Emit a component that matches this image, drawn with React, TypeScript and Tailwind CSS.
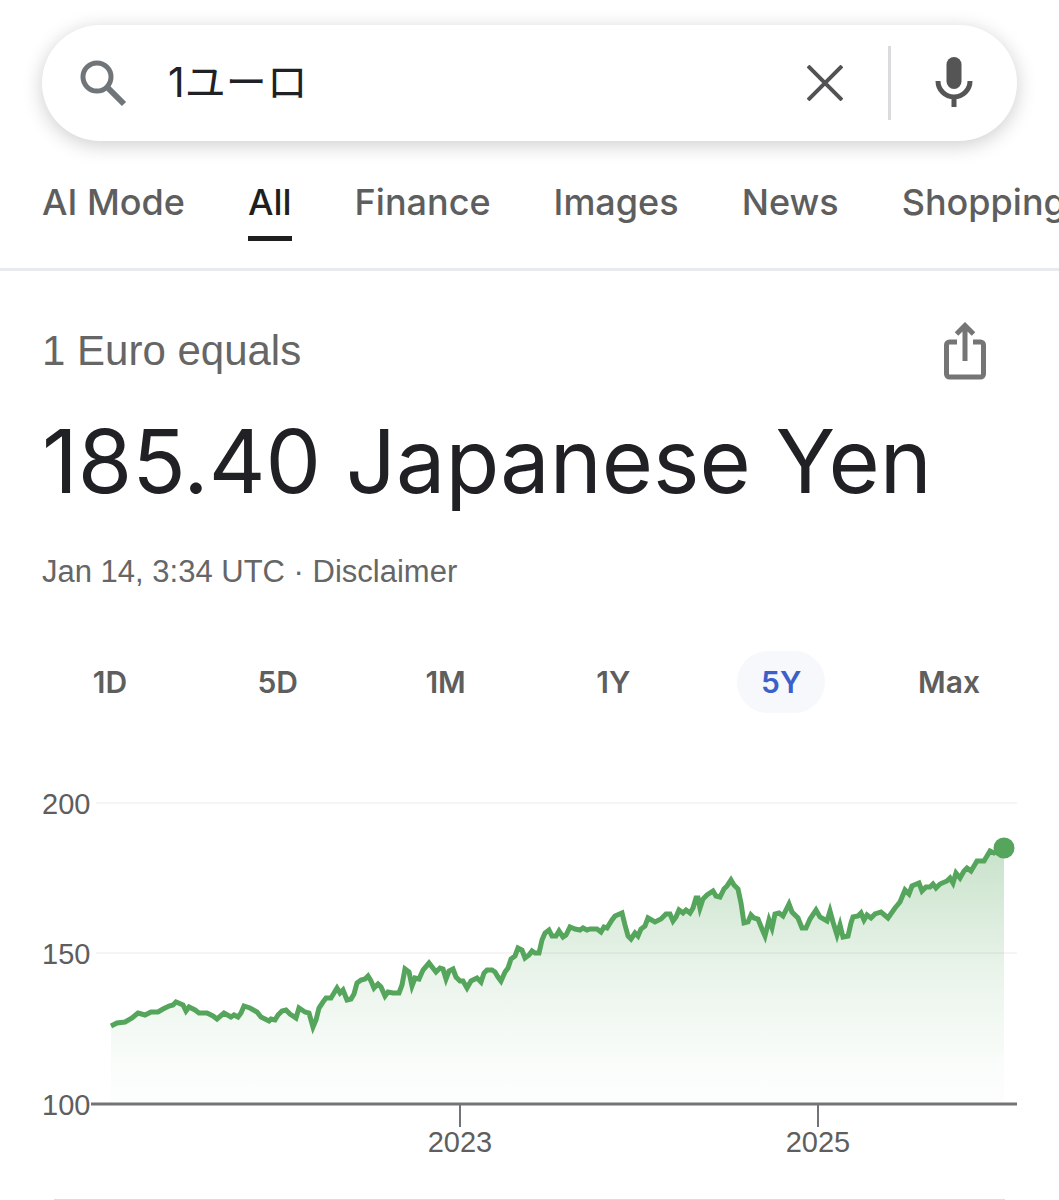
import { clsx } from "clsx";

const TABS = ["AI Mode", "All", "Finance", "Images", "News", "Shopping"] as const;

const RANGES = ["1D", "5D", "1M", "1Y", "5Y", "Max"] as const;

const CHART = { left: 42, right: 1017, top: 780, base: 1104, height: 384 };

const Y_TICKS = [
  { label: "200", y: 803 },
  { label: "150", y: 953 },
];

const X_TICKS = [
  { label: "2023", x: 460 },
  { label: "2025", x: 818 },
];

// EUR/JPY over five years, in chart units
const RATE: [number, number][] = [
  [111, 1026], [117, 1023], [125, 1022], [132, 1018], [138, 1013], [145, 1015], [151, 1012], [158, 1012],
  [163, 1009], [169, 1006], [173, 1005], [176, 1002], [183, 1005], [186, 1011], [189, 1007], [195, 1010],
  [199, 1013], [207, 1013], [213, 1016], [217, 1019], [224, 1013], [231, 1017], [234, 1015], [238, 1017],
  [241, 1013], [244, 1006], [250, 1008], [257, 1012], [261, 1017], [269, 1021], [271, 1019], [275, 1020],
  [278, 1015], [282, 1011], [286, 1010], [290, 1014], [296, 1018], [299, 1008], [305, 1012], [309, 1013],
  [313, 1027], [316, 1020], [319, 1008], [323, 1002], [326, 998], [331, 998], [334, 993], [337, 988],
  [340, 993], [343, 990], [347, 1000], [351, 999], [354, 994], [357, 983], [361, 980], [365, 979],
  [368, 976], [371, 981], [374, 988], [378, 984], [381, 987], [385, 996], [388, 992], [393, 993],
  [399, 993], [402, 985], [405, 969], [409, 972], [412, 986], [415, 978], [419, 979], [423, 970],
  [429, 963], [436, 972], [440, 968], [443, 969], [446, 979], [449, 971], [453, 969], [456, 977],
  [460, 981], [463, 981], [467, 988], [471, 981], [477, 978], [481, 982], [484, 973], [487, 970],
  [492, 970], [495, 972], [498, 977], [501, 981], [505, 972], [508, 968], [511, 959], [515, 956],
  [518, 948], [522, 950], [525, 958], [529, 955], [532, 951], [535, 953], [539, 953], [542, 940],
  [545, 933], [549, 930], [552, 936], [556, 936], [559, 931], [563, 937], [566, 935], [570, 927],
  [575, 929], [580, 930], [583, 928], [587, 930], [590, 929], [597, 929], [601, 932], [604, 927],
  [607, 928], [612, 920], [615, 916], [622, 913], [625, 925], [628, 936], [631, 939], [635, 933],
  [638, 936], [641, 929], [645, 926], [648, 918], [655, 922], [661, 919], [666, 914], [670, 914],
  [673, 921], [676, 917], [679, 910], [683, 913], [686, 910], [690, 913], [693, 908], [696, 898],
  [698, 898], [700, 908], [703, 899], [707, 895], [713, 891], [716, 896], [720, 897], [724, 889],
  [727, 886], [731, 880], [734, 885], [738, 889], [741, 903], [744, 923], [748, 922], [751, 915],
  [754, 918], [758, 919], [762, 929], [765, 936], [769, 920], [772, 928], [775, 914], [779, 913],
  [783, 916], [789, 904], [792, 912], [798, 918], [802, 928], [806, 928], [810, 919], [816, 910],
  [820, 917], [827, 921], [830, 911], [833, 922], [837, 935], [840, 925], [843, 937], [848, 936],
  [851, 923], [853, 917], [858, 916], [861, 913], [864, 920], [867, 915], [871, 918], [875, 914],
  [881, 912], [888, 918], [895, 908], [900, 902], [905, 890], [909, 894], [912, 886], [919, 883],
  [922, 891], [926, 887], [930, 887], [933, 884], [936, 888], [940, 884], [947, 881], [950, 878],
  [953, 883], [956, 873], [960, 878], [964, 871], [967, 868], [971, 871], [977, 861], [984, 861],
  [990, 851], [994, 853], [1004, 848],
];

function SearchIcon() {
  return (
    <svg viewBox="0 0 48 48" className="size-12 shrink-0" fill="none" stroke="#70757a" aria-hidden>
      <circle cx="17" cy="18" r="14" strokeWidth="5" />
      <path d="M27 28 44 45" strokeWidth="6" />
    </svg>
  );
}

function ClearIcon() {
  return (
    <svg viewBox="0 0 36 36" className="size-9" fill="none" stroke="#505254" strokeWidth="4" aria-hidden>
      <path d="M1 1 35 35M35 1 1 35" />
    </svg>
  );
}

function MicIcon() {
  return (
    <svg viewBox="0 0 38 52" className="h-[52px] w-[38px]" aria-hidden>
      <rect x="11.5" y="0" width="15" height="32" rx="7.5" fill="#555" />
      <path d="M3 24a16 16 0 0 0 32 0M19 40v10" fill="none" stroke="#555" strokeWidth="5" />
    </svg>
  );
}

function ShareIcon() {
  return (
    <svg viewBox="0 0 42 58" className="h-[58px] w-[42px]" fill="none" stroke="#757575" strokeWidth="5" aria-hidden>
      <path d="M13 20H5.5a3 3 0 0 0-3 3v29a3 3 0 0 0 3 3h31a3 3 0 0 0 3-3V23a3 3 0 0 0-3-3H29" />
      <path d="M21 39V5M12.5 12 21 3.5l8.5 8.5" />
    </svg>
  );
}

function SearchBar() {
  return (
    <form
      role="search"
      className="mx-[42px] flex h-[116px] items-center rounded-full bg-white pr-11 pl-[38px] shadow-[0_4px_20px_rgba(0,0,0,0.2)]"
      onSubmit={(e) => e.preventDefault()}
    >
      <SearchIcon />
      <input
        type="text"
        aria-label="Search"
        defaultValue="1ユーロ"
        className="ml-10 h-16 min-w-0 flex-1 bg-transparent pb-2 font-['Inter','Noto_Sans_CJK_JP',sans-serif] text-[41px] text-[#202124] outline-none"
      />
      <button type="button" aria-label="Clear">
        <ClearIcon />
      </button>
      <span className="mr-[44px] ml-[45px] h-[74px] w-[3px] bg-[#dadbdd]" />
      <button type="button" aria-label="Search by voice">
        <MicIcon />
      </button>
    </form>
  );
}

function SearchTabs() {
  return (
    <nav
      aria-label="Search filters"
      className="mt-[35px] flex gap-[63px] overflow-hidden border-b-3 border-[#e8eaed] pb-[27px] pl-[42px] text-[36px] leading-[52px] font-medium text-[#5e5e5e]"
    >
      {TABS.map((tab) => (
        <a
          key={tab}
          href="#"
          aria-current={tab === "All" ? "page" : undefined}
          className={clsx(
            "shrink-0 border-b-5 pb-2 whitespace-nowrap",
            tab === "All" ? "border-[#1f1f1f] text-[#1f1f1f]" : "border-transparent",
          )}
        >
          {tab}
        </a>
      ))}
    </nav>
  );
}

function RangePicker() {
  return (
    <div className="mt-[59px] grid grid-cols-6 justify-items-center px-[26px]">
      {RANGES.map((range) => (
        <button
          key={range}
          type="button"
          aria-pressed={range === "5Y"}
          className={clsx(
            "h-[62px] rounded-full px-6 text-[30px] font-semibold",
            range === "5Y" ? "bg-[#f6f8fb] text-[#3c5fc9]" : "text-[#5e5e5e]",
          )}
        >
          {range}
        </button>
      ))}
    </div>
  );
}

function RateChart() {
  const line = RATE.map(([x, y]) => `${x},${y}`).join(" ");
  const [endX, endY] = RATE[RATE.length - 1];

  return (
    <svg
      viewBox={`${CHART.left} ${CHART.top} ${CHART.right - CHART.left} ${CHART.height}`}
      className="mt-[67px] block h-auto w-full font-['Liberation_Sans',sans-serif] text-[29px]"
      role="img"
      aria-label="Euro to Japanese Yen, five years"
    >
      <defs>
        <linearGradient id="rate-fill" gradientUnits="userSpaceOnUse" x1="0" y1="848" x2="0" y2={CHART.base}>
          <stop offset="0" stopColor="#55a55c" stopOpacity="0.32" />
          <stop offset="0.5" stopColor="#55a55c" stopOpacity="0.12" />
          <stop offset="0.85" stopColor="#55a55c" stopOpacity="0.03" />
          <stop offset="1" stopColor="#7fb3d9" stopOpacity="0.02" />
        </linearGradient>
      </defs>

      <polygon
        points={`${RATE[0][0]},${CHART.base} ${line} ${endX},${CHART.base}`}
        fill="url(#rate-fill)"
      />

      {Y_TICKS.map(({ label, y }) => (
        <g key={label}>
          <path d={`M96 ${y}H${CHART.right}`} stroke="#000" strokeOpacity="0.04" strokeWidth="2" />
          <text x="42" y={y + 11} fill="#5e5e5e">
            {label}
          </text>
        </g>
      ))}
      <text x="42" y={CHART.base + 11} fill="#5e5e5e">
        100
      </text>
      <path d={`M91 ${CHART.base}H${CHART.right}`} stroke="#747478" strokeWidth="3" />

      {X_TICKS.map(({ label, x }) => (
        <g key={label}>
          <path d={`M${x} ${CHART.base}v23`} stroke="#747478" strokeWidth="2" />
          <text x={x} y="1152" textAnchor="middle" fill="#5e5e5e">
            {label}
          </text>
        </g>
      ))}

      <polyline points={line} fill="none" stroke="#55a55c" strokeWidth="5" />
      <circle cx={endX} cy={endY} r="10.5" fill="#55a55c" />
    </svg>
  );
}

export default function App() {
  return (
    <div className="min-h-screen overflow-hidden bg-white pt-[25px] font-['Inter',sans-serif]">
      <SearchBar />
      <SearchTabs />

      <main>
        <section className="px-[42px] pt-12">
          <div className="flex items-center justify-between">
            <p className="font-['Liberation_Sans',sans-serif] text-[42px] leading-[64px] text-[#666]">
              1 Euro equals
            </p>
            <button type="button" aria-label="Share" className="mr-[31px]">
              <ShareIcon />
            </button>
          </div>
          <h1 className="mt-6 text-[88px] leading-[108px] whitespace-nowrap text-[#202124]">
            185.40 Japanese Yen
          </h1>
          <p className="mt-[37px] font-['Liberation_Sans',sans-serif] text-[31px] leading-[40px] text-[#666]">
            Jan 14, 3:34 UTC ·{" "}
            <a href="#">Disclaimer</a>
          </p>
        </section>

        <RangePicker />

        <div className="px-[42px]">
          <RateChart />
        </div>
        <hr className="mx-[54px] mt-[35px] border-[#dadce0]" />
      </main>
    </div>
  );
}
